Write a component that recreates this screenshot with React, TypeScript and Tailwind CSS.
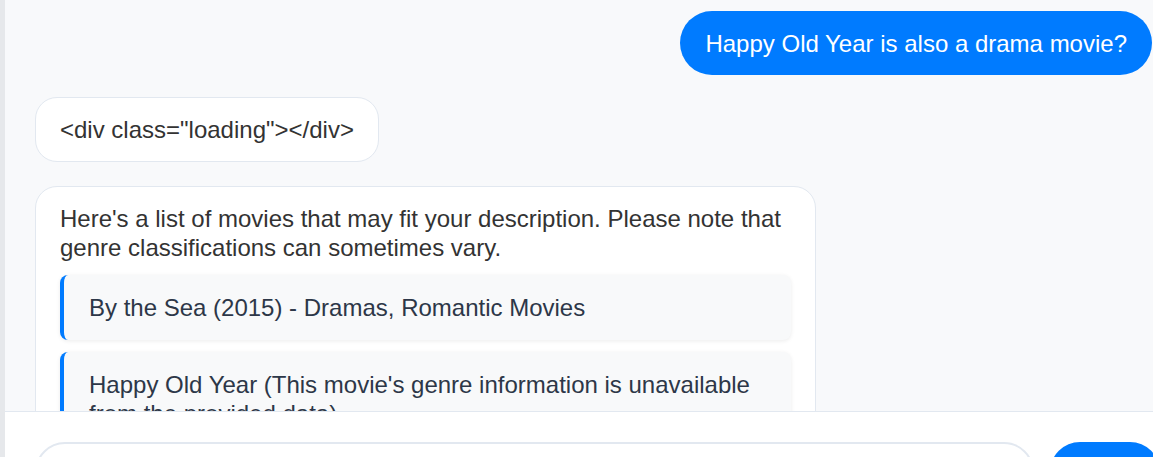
import { useState } from 'react';

const movies = [
  'By the Sea (2015) - Dramas, Romantic Movies',
  "Happy Old Year (This movie's genre information is unavailable from the provided data).",
  'Rebecca (2020) - Dramas, Romantic Movies, Thrillers',
];

export default function App() {
  const [draft, setDraft] = useState('');

  return (
    <div
      className="flex h-[457px] w-full overflow-hidden bg-[#f8f9fb] text-[24px] text-[#333333]"
      style={{ fontFamily: '"Liberation Sans", Arial, sans-serif' }}
    >
      <div className="w-[5px] shrink-0 bg-[#e6e8eb]" />

      <div className="flex min-w-0 flex-1 flex-col">
        <div className="h-[411px] shrink-0 overflow-hidden pl-[30px] pr-px pt-[11px]">
          <div className="flex justify-end">
            <div className="flex h-[64px] items-center rounded-[32px] bg-[#007bff] px-[25px] leading-[29px] text-white">
              Happy Old Year is also a drama movie?
            </div>
          </div>

          <div className="mt-[22px] flex">
            <div className="rounded-[22px] border border-[#e2e8f0] bg-white px-6 py-[17px] leading-[29px]">
              {'<div class="loading"></div>'}
            </div>
          </div>

          <div className="mt-[24px] flex">
            <div className="w-[781px] rounded-[22px] border border-[#e2e8f0] bg-white px-6 py-[17px] leading-[29px]">
              <p>
                Here's a list of movies that may fit your description. Please note that genre
                classifications can sometimes vary.
              </p>
              <div className="mt-[13px] flex flex-col gap-3">
                {movies.map((m) => (
                  <div
                    key={m}
                    className="rounded-lg border-l-4 border-[#007bff] bg-[#f8f9fa] py-[18px] pl-[25px] pr-6 leading-[29px] text-[#2d3748] shadow-[0_1px_4px_rgba(0,0,0,0.08)]"
                  >
                    {m}
                  </div>
                ))}
              </div>
            </div>
          </div>
        </div>

        <div className="flex flex-1 items-start gap-4 border-t border-[#e2e8f0] bg-white pl-[30px] pt-[30px]">
          <input
            value={draft}
            onChange={(e) => setDraft(e.target.value)}
            className="h-[60px] w-[999px] shrink-0 rounded-full border-2 border-[#e2e8f0] bg-white px-6 text-[20px] outline-none"
          />
          <button className="h-[60px] w-[110px] shrink-0 rounded-full bg-[#007bff] text-white">
            Send
          </button>
        </div>
      </div>
    </div>
  );
}
